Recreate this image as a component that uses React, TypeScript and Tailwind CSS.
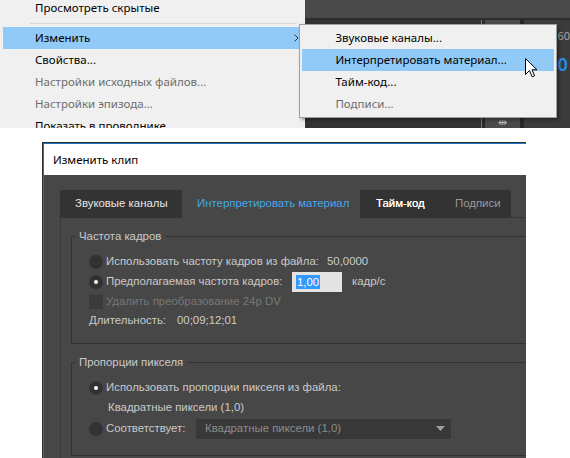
import React from 'react';

const Chevron = () => (
  <svg width="5" height="8" viewBox="0 0 5 8" className="text-[#333]">
    <path d="M0.5 0.5 L4 4 L0.5 7.5" fill="none" stroke="currentColor" strokeWidth="1" />
  </svg>
);

const Cursor = () => (
  <svg width="13" height="20" viewBox="0 0 13 20">
    <path
      d="M0.5 0.5 L0.5 16.5 L4.5 12.5 L7.2 18.8 L9.6 17.8 L7 11.8 L12 11.8 Z"
      fill="#fff"
      stroke="#000"
      strokeWidth="1"
      strokeLinejoin="miter"
    />
  </svg>
);

interface MenuItemProps {
  label: string;
  active?: boolean;
  disabled?: boolean;
  submenu?: boolean;
  indent?: string;
}

const MenuItem = ({ label, active, disabled, submenu, indent = 'pl-[32px]' }: MenuItemProps) => (
  <div
    className={`h-[22px] flex items-center ${indent} pr-[6px] whitespace-nowrap ${active ? 'bg-[#91c9f7]' : ''} ${
      disabled ? 'text-[#6d6d6d]' : 'text-black'
    }`}
  >
    <span className="flex-1">{label}</span>
    {submenu && <Chevron />}
  </div>
);

const Radio = ({ checked }: { checked?: boolean }) => (
  <span className="w-[14px] h-[14px] rounded-full bg-[#323232] flex items-center justify-center shrink-0">
    {checked && <span className="w-[4px] h-[4px] rounded-full bg-white" />}
  </span>
);

const Tabs = () => (
  <div className="flex h-[28px] whitespace-nowrap">
    <div className="w-[122px] bg-[#333333] text-[#e6e6e6] pl-[15px] flex items-center">Звуковые каналы</div>
    <div className="w-[178px] bg-[#474747] text-[#47a6ea] pl-[15px] flex items-center">Интерпретировать материал</div>
    <div className="w-[81px] bg-[#333333] text-white pl-[16px] flex items-center [text-shadow:0_0_0.4px_#fff]">Тайм-код</div>
    <div className="w-[70px] bg-[#333333] text-[#9a9a9a] pl-[14px] flex items-center">Подписи</div>
    <div className="flex-1 border-b border-[#383838]" />
  </div>
);

export default function App() {
  return (
    <div className="w-[570px] h-[458px] bg-white overflow-hidden leading-none">
      {/* top screenshot: context menu */}
      <div className="flex h-[128px] overflow-hidden font-['Noto_Sans',sans-serif] text-[11.5px]">
        <div className="w-[308px] bg-[#f0f0f0] pl-[3px] overflow-hidden">
          <div className="-mt-[3px]">
            <MenuItem label="Просмотреть скрытые" />
            <div className="h-[8px] flex items-center pl-[27px] pr-[8px]">
              <div className="h-px w-full bg-[#d7d7d7]" />
            </div>
            <MenuItem label="Изменить" active submenu />
            <MenuItem label="Свойства..." />
            <MenuItem label="Настройки исходных файлов..." disabled />
            <MenuItem label="Настройки эпизода..." disabled />
            <MenuItem label="Показать в проводнике..." />
          </div>
        </div>

        <div className="relative flex-1 flex flex-col bg-[#383838]">
          <div className="h-[18px] bg-[#494949]" />
          <div className="h-[2px] bg-[#2c2c2c]" />
          <div className="flex flex-1">
            <div className="w-[176px] bg-[#323232]" />
            <div className="w-px bg-[#2d8ceb]" />
            <div className="w-[3px] bg-[#2a2a2a]" />
            <div className="w-[35px] bg-[#4a4a4a] flex items-end justify-center pb-[1px] text-[#bdbdbd] text-[11px]">⇹</div>
            <div className="w-[4px] bg-[#262626]" />
            <div className="flex-1 bg-[#3b3b3b] pl-[33px] pt-[10px] flex flex-col gap-[14px]">
              <span className="text-[#a8a8a8] text-[11px]">60</span>
              <span className="text-[#2d8ceb] text-[18px] font-semibold">0</span>
            </div>
          </div>

          {/* submenu */}
          <div className="absolute left-[-6px] top-[24px] w-[258px] bg-[#f0f0f0] border border-[#a0a0a0] py-[2px] px-[2px] shadow-[2px_2px_3px_rgba(0,0,0,0.35)]">
            <MenuItem label="Звуковые каналы..." indent="pl-[33px]" />
            <MenuItem label="Интерпретировать материал..." indent="pl-[33px]" active />
            <MenuItem label="Тайм-код..." indent="pl-[33px]" />
            <MenuItem label="Подписи..." indent="pl-[33px]" disabled />
          </div>
          <div className="absolute left-[220px] top-[58px]">
            <Cursor />
          </div>
        </div>
      </div>

      {/* bottom screenshot: dialog */}
      <div className="mt-[14px] ml-[42px] w-[484px] h-[330px] border-l border-t border-[#2e2e2e] overflow-hidden font-['Liberation_Sans',sans-serif] text-[11.4px] whitespace-nowrap">
        <div className="h-full border-l border-t border-[#1f74c6] flex flex-col">
          <div className="h-[31px] bg-white flex items-center pl-[9px] text-black font-['Noto_Sans',sans-serif] text-[11.5px]">
            Изменить клип
          </div>
          <div className="flex-1 bg-[#474747] pl-[16px] pt-[15px] text-[#cacaca]">
            <Tabs />
            <div className="border-l border-[#383838] pl-[10px] pt-[10px] h-full">
              {/* frame rate group */}
              <fieldset className="w-[500px] border border-[#333333] pl-[3px] pb-[13px]">
                <legend className="px-[4px] leading-[16px]">Частота кадров</legend>
                <div className="pl-[14px] pt-[8px]">
                  <div className="h-[20px] flex items-center">
                    <Radio />
                    <span className="w-[224px] shrink-0 pl-[3px]">Использовать частоту кадров из файла:</span>
                    <span>50,0000</span>
                  </div>
                  <div className="h-[20px] flex items-center">
                    <Radio checked />
                    <span className="w-[189px] shrink-0 pl-[3px]">Предполагаемая частота кадров:</span>
                    <span className="w-[50px] h-[20px] bg-[#e4e4e4] flex items-center pl-[4px]">
                      <span className="bg-[#3399ff] text-white px-px leading-[14px]">1,00</span>
                    </span>
                    <span className="ml-[10px]">кадр/с</span>
                  </div>
                  <div className="h-[19px] flex items-center">
                    <span className="w-[14px] h-[14px] bg-[#3b3b3b] shrink-0" />
                    <span className="pl-[3px] text-[#777777]">Удалить преобразование 24p DV</span>
                  </div>
                  <div className="h-[19px] flex items-center">
                    <span className="w-[88px] shrink-0">Длительность:</span>
                    <span>00;09;12;01</span>
                  </div>
                </div>
              </fieldset>

              {/* pixel aspect group */}
              <fieldset className="w-[500px] mt-[10px] border border-[#333333] pl-[3px] pb-[16px]">
                <legend className="px-[4px] leading-[16px]">Пропорции пикселя</legend>
                <div className="pl-[14px] pt-[8px]">
                  <div className="h-[20px] flex items-center">
                    <Radio checked />
                    <span className="pl-[3px]">Использовать пропорции пикселя из файла:</span>
                  </div>
                  <div className="h-[20px] flex items-center pl-[19px]">Квадратные пиксели (1,0)</div>
                  <div className="h-[21px] flex items-center">
                    <Radio />
                    <span className="w-[93px] shrink-0 pl-[3px]">Соответствует:</span>
                    <div className="w-[255px] h-[20px] bg-[#383838] flex items-center pl-[9px] pr-[6px] text-[#8c8c8c]">
                      <span className="flex-1">Квадратные пиксели (1,0)</span>
                      <svg width="9" height="5" viewBox="0 0 9 5">
                        <path d="M0 0 L9 0 L4.5 5 Z" fill="#a0a0a0" />
                      </svg>
                    </div>
                  </div>
                </div>
              </fieldset>
            </div>
          </div>
        </div>
      </div>
    </div>
  );
}
